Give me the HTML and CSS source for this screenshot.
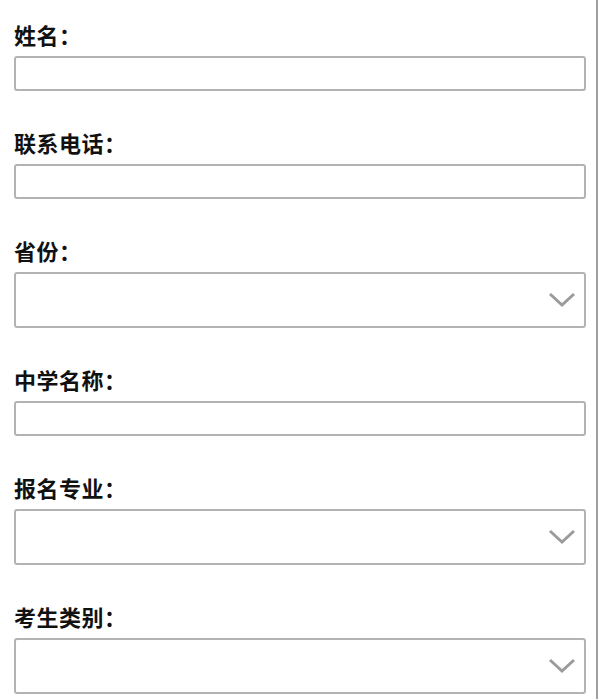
FILE: index.html
```html
<!DOCTYPE html>
<html>
<head>
<meta charset="UTF-8">
<title>报名信息</title>
<link rel="stylesheet" href="styles.css">
</head>
<body>
	<div class="page">
		<form class="signForm">
			<div class="field">
				<label class="fieldLabel">姓名：</label>
				<input type="text" class="textBox"/>
			</div>

			<div class="field">
				<label class="fieldLabel">联系电话：</label>
				<input type="text" class="textBox"/>
			</div>

			<div class="field">
				<label class="fieldLabel">省份：</label>
				<div class="selectWrap">
					<select class="selectBox"><option></option></select>
					<svg class="arrow" width="28" height="16" viewBox="0 0 28 16"><polyline points="2,2 14,13 26,2" fill="none" stroke="#9b9b9b" stroke-width="3"/></svg>
				</div>
			</div>

			<div class="field">
				<label class="fieldLabel">中学名称：</label>
				<input type="text" class="textBox"/>
			</div>

			<div class="field">
				<label class="fieldLabel">报名专业：</label>
				<div class="selectWrap">
					<select class="selectBox"><option></option></select>
					<svg class="arrow" width="28" height="16" viewBox="0 0 28 16"><polyline points="2,2 14,13 26,2" fill="none" stroke="#9b9b9b" stroke-width="3"/></svg>
				</div>
			</div>

			<div class="field">
				<label class="fieldLabel">考生类别：</label>
				<div class="selectWrap">
					<select class="selectBox"><option></option></select>
					<svg class="arrow" width="28" height="16" viewBox="0 0 28 16"><polyline points="2,2 14,13 26,2" fill="none" stroke="#9b9b9b" stroke-width="3"/></svg>
				</div>
			</div>
		</form>
	</div>
</body>
</html>
```

FILE: styles.css
```css
/* 페이지 기본 */
body{margin:0; background-color:#fff; font-family:"Noto Sans CJK SC", "Noto Sans", sans-serif; color:#111;}

/* 오른쪽 세로선 */
.page{width:596px; min-height:699px; border-right:2px solid #a0a0a0;}

.signForm{padding:20px 10px 0 14px;}

/* 항목 하나 */
.field{display:flex; flex-direction:column; margin-bottom:37px;}

.fieldLabel{font-size:22px; font-weight:bold; line-height:28px; margin-bottom:8px; letter-spacing:0.5px;}

/* text 입력창 */
.textBox{box-sizing:border-box; width:572px; height:35px; border:2px solid #b3b3b3; border-radius:3px;
	padding:0 8px; font-size:16px; background-color:#fff; outline:none;}

/* select 입력창 */
.selectWrap{position:relative; width:572px;}
.selectBox{box-sizing:border-box; width:572px; height:56px; border:2px solid #b3b3b3; border-radius:3px;
	padding:0 8px; font-size:16px; background-color:#fff; -webkit-appearance:none; appearance:none; outline:none;}
.arrow{position:absolute; right:10px; top:20px; pointer-events:none;}
```
